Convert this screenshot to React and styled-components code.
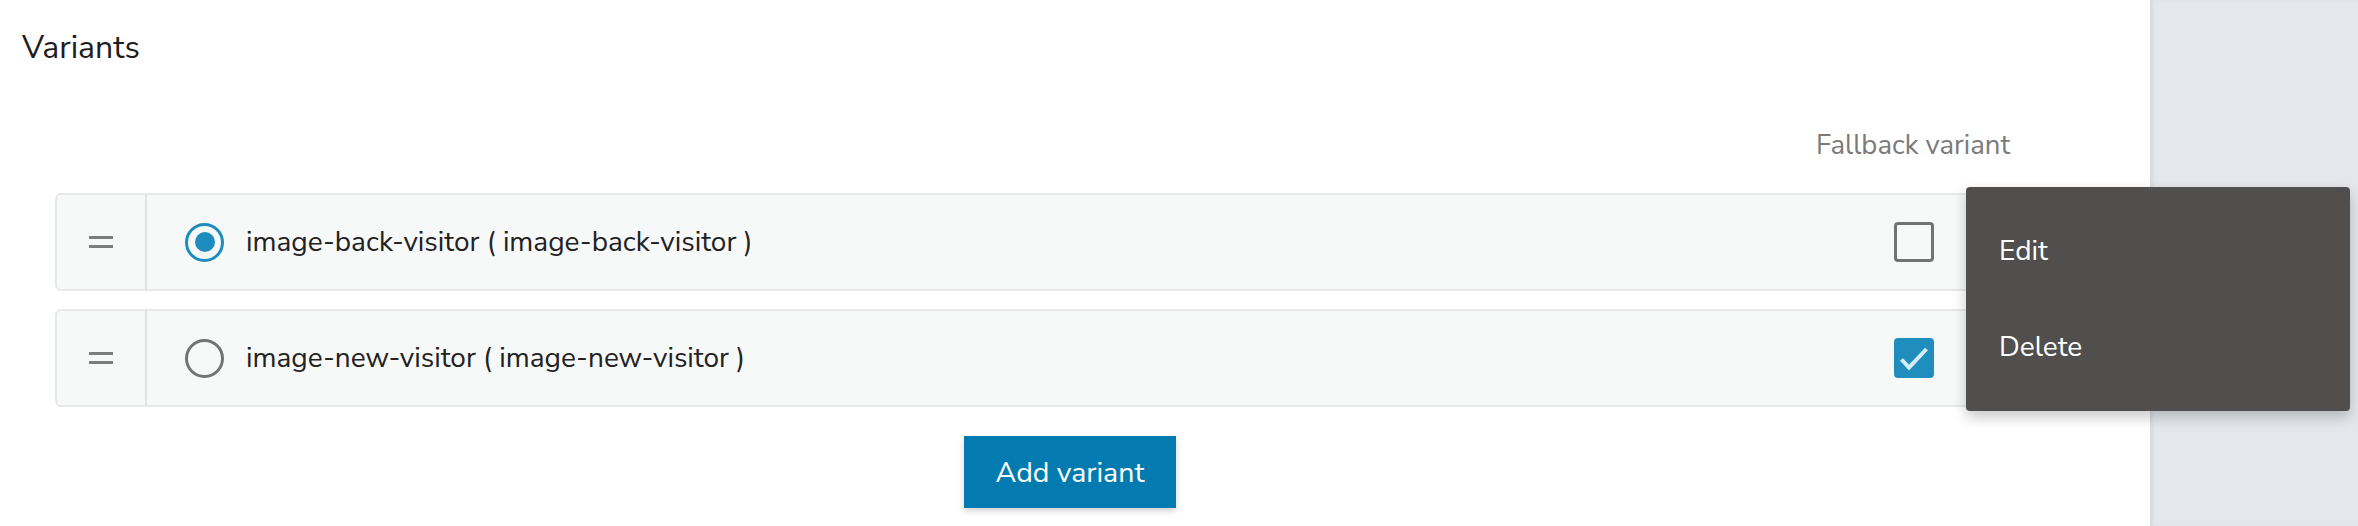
import React from 'react';
import styled, { createGlobalStyle } from 'styled-components';

const GlobalStyle = createGlobalStyle`
  html, body {
    margin: 0;
    padding: 0;
    height: 100%;
    overflow: hidden;
  }
  body {
    font-family: "Nunito Sans", Lato, "Open Sans", sans-serif;
    color: #222;
  }
`;

const variants = [
  { id: 'image-back-visitor', selected: true, fallback: false },
  { id: 'image-new-visitor', selected: false, fallback: true },
];

const App = () => {
  return (
    <>
      <GlobalStyle />
      <Page>
        <Main>
          <Title>Variants</Title>

          <ColumnHeader>
            <span />
            <span />
            <HeaderLabel>Fallback variant</HeaderLabel>
            <span />
          </ColumnHeader>

          <List>
            {variants.map((v) => (
              <Row key={v.id}>
                <HandleCell>
                  <Handle>
                    <HandleLine />
                    <HandleLine />
                  </Handle>
                </HandleCell>
                <NameCell>
                  <Radio $checked={v.selected} />
                  <Name>{v.id} ( {v.id} )</Name>
                </NameCell>
                <FallbackCell>
                  <Checkbox $checked={v.fallback}>
                    {v.fallback && (
                      <svg width="34" height="34" viewBox="0 0 34 34" fill="none">
                        <path d="M4.5 18.5l7.5 8L29.5 8" stroke="#d6edf6" strokeWidth="4" />
                      </svg>
                    )}
                  </Checkbox>
                </FallbackCell>
                <ActionCell />
              </Row>
            ))}

            <Menu>
              <MenuItem>Edit</MenuItem>
              <MenuItem>Delete</MenuItem>
            </Menu>
          </List>

          <Footer>
            <AddButton>Add variant</AddButton>
          </Footer>
        </Main>
        <Sidebar />
      </Page>
    </>
  );
};

const Page = styled.div`
  display: flex;
  height: 100vh;
  background: #fff;
`;

const Main = styled.div`
  width: 2150px;
  flex-shrink: 0;
  background: #fff;
  box-sizing: border-box;
  padding: 29px 55px 0 55px;
  position: relative;
  z-index: 1;
`;

const Sidebar = styled.div`
  flex: 1;
  background: #e4e8ec;
  box-shadow: inset 4px 0 4px -2px rgba(0, 0, 0, 0.08);
`;

const Title = styled.h2`
  margin: 0 0 0 -33px;
  font-size: 32px;
  line-height: 1.2;
  font-weight: 400;
  color: #1d1d1d;
`;

const rowColumns = `
  display: grid;
  grid-template-columns: 90px 1fr 200px 79px;
  align-items: center;
`;

const ColumnHeader = styled.div`
  ${rowColumns}
  margin-top: 62px;
`;

const HeaderLabel = styled.div`
  text-align: center;
  font-size: 27.5px;
  line-height: 1.2;
  color: #7a7a7a;
  margin-left: -6px;
  white-space: nowrap;
`;

const List = styled.div`
  position: relative;
  margin-top: 31px;
  display: flex;
  flex-direction: column;
  gap: 18px;
`;

const Row = styled.div`
  ${rowColumns}
  height: 98px;
  box-sizing: border-box;
  background: #f7f8f8;
  border: 2px solid #e6e8ea;
  border-radius: 6px;
`;

const HandleCell = styled.div`
  height: 100%;
  display: flex;
  align-items: center;
  justify-content: center;
  border-right: 2px solid #e0e2e4;
`;

const Handle = styled.div`
  display: flex;
  flex-direction: column;
  gap: 6px;
  width: 24px;
`;

const HandleLine = styled.div`
  height: 3px;
  background: #7d7d7d;
`;

const NameCell = styled.div`
  display: flex;
  align-items: center;
  padding-left: 38px;
  gap: 22px;
`;

const Radio = styled.div`
  width: 39px;
  height: 39px;
  box-sizing: border-box;
  border-radius: 50%;
  border: 3px solid ${(p) => (p.$checked ? '#1e8cbe' : '#737373')};
  display: flex;
  align-items: center;
  justify-content: center;
  &::after {
    content: '';
    display: ${(p) => (p.$checked ? 'block' : 'none')};
    width: 20px;
    height: 20px;
    border-radius: 50%;
    background: #1e8cbe;
  }
`;

const Name = styled.div`
  font-size: 28px;
  color: #222;
`;

const FallbackCell = styled.div`
  display: flex;
  justify-content: center;
`;

const Checkbox = styled.div`
  width: 40px;
  height: 40px;
  box-sizing: border-box;
  border-radius: 4px;
  border: 3px solid ${(p) => (p.$checked ? '#1f8dbd' : '#737373')};
  background: ${(p) => (p.$checked ? '#1f8dbd' : 'transparent')};
  display: flex;
  align-items: center;
  justify-content: center;
`;

const ActionCell = styled.div``;

const Menu = styled.div`
  position: absolute;
  top: -6px;
  left: 1911px;
  width: 384px;
  box-sizing: border-box;
  padding: 16px 0;
  background: #504f4d;
  border-radius: 4px;
  box-shadow: 0 6px 14px rgba(0, 0, 0, 0.22);
  z-index: 5;
`;

const MenuItem = styled.div`
  height: 96px;
  display: flex;
  align-items: center;
  padding-left: 33px;
  font-size: 28px;
  color: #fff;
`;

const Footer = styled.div`
  display: flex;
  justify-content: center;
  margin-top: 29px;
  padding-right: 10px;
`;

const AddButton = styled.button`
  width: 212px;
  height: 72px;
  border: none;
  background: #037bb0;
  color: #fff;
  font-family: inherit;
  font-size: 28.5px;
  box-shadow: 0 3px 6px rgba(0, 0, 0, 0.18);
  cursor: pointer;
`;

export default App;
